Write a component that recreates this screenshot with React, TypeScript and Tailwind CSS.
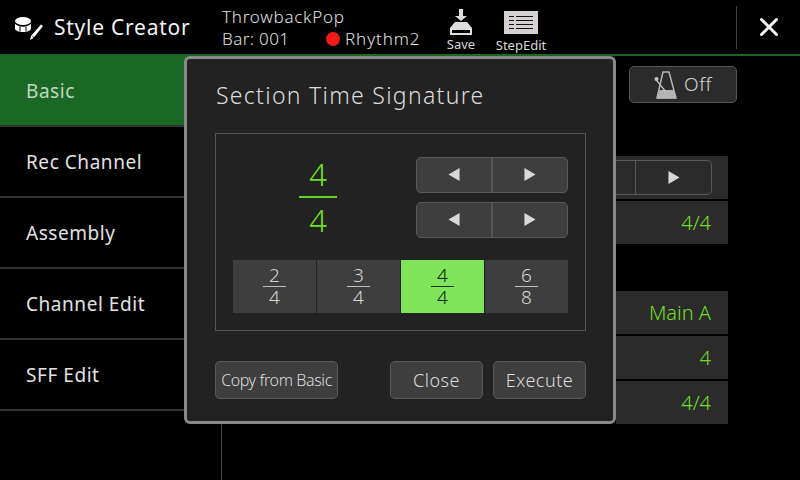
import { X } from 'lucide-react'

const font = { fontFamily: '"Noto Sans", sans-serif' }

const navItems = ['Basic', 'Rec Channel', 'Assembly', 'Channel Edit', 'SFF Edit']
const fractions = [['2', '4'], ['3', '4'], ['4', '4'], ['6', '8']]

function HeaderIcon() {
  return (
    <svg width="30" height="26" viewBox="0 0 30 26" className="shrink-0">
      <ellipse cx="9" cy="6" rx="8" ry="4" fill="#fff" />
      <path d="M1 8.5v5c0 2 3.5 3.5 8 3.5s8-1.500 8-3.500v-5c-1 2-4.500 3.200-8 3.200s-7-1.200-8-3.200z" fill="#fff" />
      <path d="M6 11.500v5M12 11.500v5" stroke="#000" strokeWidth="1" />
      <path d="M27 9.500l2 1.500-9.500 12-3.500 2 1-4z" fill="#fff" />
      <path d="M18.500 21.500l1.500 1.200" stroke="#000" strokeWidth="1" />
    </svg>
  )
}

function SaveIcon() {
  return (
    <svg width="24" height="26" viewBox="0 0 24 26">
      <path d="M10 0h4v7h4l-6 5-6-5h4z" fill="#ddd" />
      <path d="M6 13h12l5 6v7H1v-7z" fill="#ddd" />
      <rect x="3" y="21" width="18" height="3" fill="#000" />
    </svg>
  )
}

function StepEditIcon() {
  return (
    <svg width="34" height="23" viewBox="0 0 34 23">
      <rect width="34" height="23" fill="#d4d0d4" />
      <path d="M5 5.500h5M12 5.500h17M5 9.500h5M12 9.500h17M5 13.500h5M12 13.500h17M5 17.500h5M12 17.500h17" stroke="#111" strokeWidth="1" />
    </svg>
  )
}

function Metronome() {
  return (
    <svg width="24" height="28" viewBox="0 0 24 28">
      <path d="M9 1h6l7 26H3z" fill="none" stroke="#b5b5b5" strokeWidth="1.500" />
      <path d="M5.500 19h14l2.500 8.500H3z" fill="#b5b5b5" />
      <path d="M1.500 8L12 21" stroke="#c5c5c5" strokeWidth="1.200" />
      <circle cx="2.500" cy="8" r="2" fill="#c5c5c5" />
    </svg>
  )
}

function ArrowPair() {
  return (
    <div className="flex h-[36px] w-[152px] rounded-[5px] border border-[#5a5a5a] bg-[#3e3e3e]">
      <div className="flex flex-1 items-center justify-center border-r-2 border-[#555]">
        <svg width="12" height="13" viewBox="0 0 12 14"><path d="M12 0v14L0 7z" fill="#d8d8d8" /></svg>
      </div>
      <div className="flex flex-1 items-center justify-center">
        <svg width="12" height="13" viewBox="0 0 12 14"><path d="M0 0v14l12-7z" fill="#d8d8d8" /></svg>
      </div>
    </div>
  )
}

function ValueRow({ text }: { text: string }) {
  return (
    <div className="flex h-[43px] w-full items-center justify-end bg-[#2b2b2b] pr-[17px] text-[20px] font-light text-[#74de24]">
      {text}
    </div>
  )
}

function DialogButton({ label, className }: { label: string; className: string }) {
  return (
    <div className={`flex h-[38px] items-center justify-center rounded-[5px] border border-[#5a5a5a] bg-[#3e3e3e] font-light text-[#dcdcdc] ${className}`}>
      {label}
    </div>
  )
}

export default function App() {
  return (
    <div className="relative flex h-[480px] w-[800px] flex-col overflow-hidden bg-black text-white" style={font}>
      {/* Header */}
      <div className="flex h-[56px] shrink-0 border-b-2 border-[#1b6824]">
        <div className="flex w-[221px] items-center pl-[14px] pt-[2px]">
          <HeaderIcon />
          <span className="ml-[10px] text-[21px] tracking-[0.75px] text-[#f2f2f2]">Style Creator</span>
        </div>
        <div className="flex w-[204px] flex-col pl-px pt-[6px] text-[17px] font-light leading-[22px] text-[#e0e0e0]">
          <span className="tracking-[0.75px]">ThrowbackPop</span>
          <div className="flex items-center">
            <span className="w-[104px] tracking-[0.4px]">Bar: 001</span>
            <span className="h-[14px] w-[14px] rounded-full bg-[#f01a1a]" />
            <span className="ml-[5px] tracking-[0.9px]">Rhythm2</span>
          </div>
        </div>
        <div className="flex w-[72px] flex-col items-center pt-[9px] text-[13px] leading-[16px] text-[#d8d8d8]">
          <SaveIcon />
          <span className="mt-[1px]">Save</span>
        </div>
        <div className="flex w-[48px] flex-col items-center pt-[11px] text-[13px] leading-[16px] text-[#d8d8d8]">
          <StepEditIcon />
          <span className="mt-[3px]">StepEdit</span>
        </div>
        <div className="mb-[5px] ml-[191px] mt-[6px] w-px bg-[#444]" />
        <div className="flex flex-1 items-center justify-center">
          <X size={30} strokeWidth={2.4} color="#f5f5f5" />
        </div>
      </div>

      {/* Body */}
      <div className="flex min-h-0 flex-1">
        <div className="flex w-[222px] shrink-0 flex-col border-r border-[#444]">
          {navItems.map((item, i) => (
            <div
              key={item}
              className={`flex h-[71px] items-center border-b-2 border-[#333] pl-[26px] pt-[2px] text-[19px] tracking-[0.55px] ${i === 0 ? 'bg-[#1b6824] text-[#bfd8c0]' : 'text-[#e2e2e2]'}`}
            >
              {item}
            </div>
          ))}
        </div>
        <div className="flex flex-1 flex-col items-end pr-[72px]">
          <div className="mr-[-9px] mt-[10px] flex h-[37px] w-[108px] items-center justify-center gap-[6px] rounded-[5px] border border-[#555] bg-[#2b2b2b] text-[19px] font-light text-[#d4d4d4]">
            <Metronome />
            <span className="tracking-[0.5px]">Off</span>
          </div>
          <div className="mt-[53px] w-[112px]">
            <div className="flex h-[43px] items-center justify-end bg-[#2b2b2b] pr-[16px]">
              <div className="flex h-[35px] w-[96px] rounded-r-[5px] border border-l-0 border-[#5a5a5a]">
                <div className="w-[20px] border-r border-[#5a5a5a]" />
                <div className="flex flex-1 items-center justify-center">
                  <svg width="12" height="13" viewBox="0 0 12 14"><path d="M0 0v14l12-7z" fill="#d8d8d8" /></svg>
                </div>
              </div>
            </div>
            <div className="mt-[2px]"><ValueRow text="4/4" /></div>
          </div>
          <div className="mt-[47px] flex w-[112px] flex-col gap-[2px]">
            <ValueRow text="Main A" />
            <ValueRow text="4" />
            <ValueRow text="4/4" />
          </div>
        </div>
      </div>

      {/* Dialog */}
      <div className="absolute left-[184px] top-[56px] flex h-[368px] w-[432px] flex-col rounded-[6px] border-[3px] border-[#8a8a8a] bg-[#222] pl-[28px] pr-[27px]">
        <div className="pl-[1px] pt-[20px] text-[23px] font-light leading-[32px] tracking-[1.3px] text-[#dcdcdc]">Section Time Signature</div>
        <div className="mt-[22px] flex h-[198px] flex-col border border-[#555] px-[17px]">
          <div className="flex h-[126px] items-center justify-between">
            <div className="ml-[66px] flex w-[38px] flex-col items-center text-[31px] font-light leading-[38px] text-[#74de24]">
              <span>4</span>
              <span className="my-[3px] h-[2px] w-full bg-[#66d321]" />
              <span>4</span>
            </div>
            <div className="flex flex-col gap-[9px]">
              <ArrowPair />
              <ArrowPair />
            </div>
          </div>
          <div className="flex h-[53px] gap-px">
            {fractions.map(([top, bottom], i) => (
              <div
                key={i}
                className={`flex flex-1 flex-col items-center justify-center text-[19px] font-light leading-[21px] ${i === 2 ? 'bg-[#7fe55a] text-[#0c240a]' : 'bg-[#3e3e3e] text-[#d4d4d4]'}`}
              >
                <span>{top}</span>
                <span className={`h-px w-[23px] ${i === 2 ? 'bg-[#123010]' : 'bg-[#c0c0c0]'}`} />
                <span>{bottom}</span>
              </div>
            ))}
          </div>
        </div>
        <div className="mt-[30px] flex text-[18px] tracking-[0.5px]">
          <DialogButton label="Copy from Basic" className="w-[123px] text-[16px] tracking-[-0.4px]" />
          <DialogButton label="Close" className="ml-[52px] w-[93px]" />
          <DialogButton label="Execute" className="ml-[10px] w-[93px]" />
        </div>
      </div>
    </div>
  )
}
